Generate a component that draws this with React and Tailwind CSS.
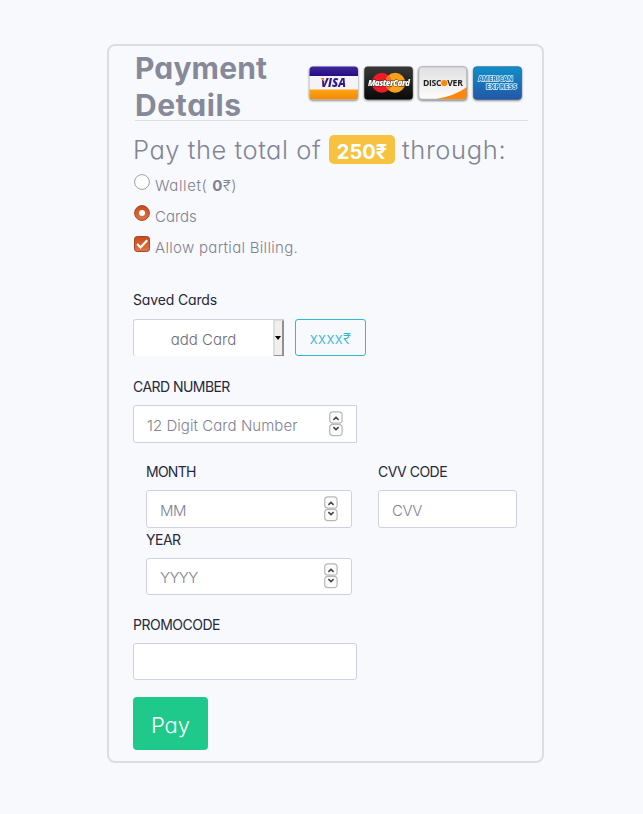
import React from "react";

function Stepper() {
  return (
    <svg className="relative -top-[0.5px] h-[26px] w-[14px] shrink-0" viewBox="0 0 14 26" fill="none">
      <rect x="0.7" y="0.9" width="12.4" height="11.2" rx="3.2" fill="#fbfbfa" stroke="#b8b8b8" strokeWidth="1.2" />
      <rect x="0.7" y="13.4" width="12.4" height="11.2" rx="3.2" fill="#fbfbfa" stroke="#b8b8b8" strokeWidth="1.2" />
      <path d="M4.4 8.9 7 6.4l2.6 2.5" stroke="#444" strokeWidth="1.5" />
      <path d="M4.4 16.1 7 18.6l2.6-2.5" stroke="#444" strokeWidth="1.5" />
    </svg>
  );
}

function Label({ children, className = "tracking-[-0.5px]" }) {
  return (
    <div className={`h-5 whitespace-nowrap text-[14px] leading-5 text-[#26283c] ${className}`}>
      <span>{children}</span>
    </div>
  );
}

function Field({ text, stepper, className = "" }) {
  return (
    <div className={`flex items-center justify-between border border-[#cfd0e2] bg-white pl-[13px] pr-[13px] text-[15px] font-[350] text-[#7f8292] ${className}`}>
      <span className="relative top-[2px] whitespace-nowrap">{text}</span>
      {stepper && <Stepper />}
    </div>
  );
}

function CardFrame({ children }) {
  return (
    <svg className="h-[37px] w-[50px] drop-shadow-[0_1px_1px_rgba(0,0,0,0.55)]" viewBox="0 0 50 37">
      {children}
    </svg>
  );
}

function Brands() {
  return (
    <div className="flex gap-[4.7px]">
      <CardFrame>
        <defs>
          <clipPath id="brand-clip"><rect x="0.5" y="1.5" width="48.5" height="33" rx="3.5" /></clipPath>
          <linearGradient id="visa-top" x2="0" y2="1"><stop stopColor="#3c2ba0" /><stop offset="1" stopColor="#2a0a80" /></linearGradient>
          <linearGradient id="visa-low" x2="0" y2="1"><stop stopColor="#ffa416" /><stop offset="1" stopColor="#f08a00" /></linearGradient>
        </defs>
        <g clipPath="url(#brand-clip)">
          <rect width="50" height="37" fill="#f4f4f6" />
          <rect y="1" width="50" height="10" fill="url(#visa-top)" />
          <rect y="24.5" width="50" height="10" fill="url(#visa-low)" />
        </g>
        <text x="12" y="22.3" textLength="25" lengthAdjust="spacingAndGlyphs" fontFamily="Open Sans, sans-serif" fontSize="12.5" fontWeight="800" fontStyle="italic" fill="#34188f">VISA</text>
        <path d="M11.5 13.3h3.4l1 4.2Z" fill="#f7a01d" />
      </CardFrame>
      <CardFrame>
        <defs><linearGradient id="mc" x2="0" y2="1"><stop stopColor="#383838" /><stop offset="1" stopColor="#090909" /></linearGradient></defs>
        <rect x="0.3" y="1.5" width="48.5" height="33" rx="3.5" fill="url(#mc)" />
        <circle cx="17.8" cy="17.7" r="10" fill="#ed1b24" />
        <circle cx="31.2" cy="17.7" r="10" fill="#f9a01b" />
        <path d="M24.5 10.3a10 10 0 0 1 0 14.8 10 10 0 0 1 0-14.8" fill="#f16d22" />
        <text x="4" y="20.8" letterSpacing="-0.6" fontFamily="Open Sans, sans-serif" fontSize="8.2" fontWeight="800" fontStyle="italic" fill="#fff" stroke="#222" strokeWidth="0.8" paintOrder="stroke">MasterCard</text>
      </CardFrame>
      <CardFrame>
        <defs>
          <linearGradient id="disc" x2="0" y2="1"><stop stopColor="#dedede" /><stop offset="1" stopColor="#ffffff" /></linearGradient>
          <clipPath id="disc-clip"><rect x="0.5" y="1.5" width="48.5" height="33" rx="3.5" /></clipPath>
        </defs>
        <g clipPath="url(#disc-clip)">
          <rect width="50" height="37" fill="url(#disc)" />
          <path d="M16 34.5Q37 31 49 22v12.5Z" fill="#ff8708" />
        </g>
        <rect x="0.8" y="1.8" width="47.9" height="32.4" rx="3.3" fill="none" stroke="#a0a0a0" strokeWidth=".7" />
        <text x="5" y="21.1" letterSpacing="-0.3" fontFamily="Open Sans, sans-serif" fontSize="8.6" fontWeight="700" fill="#222">DISC</text>
        <circle cx="26.2" cy="18" r="3.1" fill="#ff8708" />
        <text x="29.2" y="21.1" letterSpacing="-0.2" fontFamily="Open Sans, sans-serif" fontSize="8.6" fontWeight="700" fill="#222">VER</text>
      </CardFrame>
      <CardFrame>
        <defs><linearGradient id="amex" x2="0" y2="1"><stop stopColor="#1090c8" /><stop offset="1" stopColor="#2456a8" /></linearGradient></defs>
        <rect x="0.5" y="1.7" width="48" height="32.6" rx="3.3" fill="url(#amex)" stroke="#205c96" strokeWidth=".6" />
        <g fontFamily="Open Sans, sans-serif" fontSize="6.6" fontWeight="800" fill="#2585c4" stroke="#d8edf8" strokeWidth="1.3" paintOrder="stroke">
          <text x="5.2" y="15.8" textLength="35" lengthAdjust="spacingAndGlyphs">AMERICAN</text>
          <text x="13" y="24.4" textLength="31" lengthAdjust="spacingAndGlyphs">EXPRESS</text>
        </g>
      </CardFrame>
    </div>
  );
}

function Radio({ checked }) {
  return (
    <svg className="size-4 shrink-0" viewBox="0 0 16 16">
      <defs><linearGradient id="radio-fill" x2="0" y2="1"><stop stopColor="#c8491a" /><stop offset="1" stopColor="#e27548" /></linearGradient></defs>
      <circle cx="8" cy="8" r="7.4" fill={checked ? "url(#radio-fill)" : "#fff"} stroke={checked ? "#a8441f" : "#a0a0a0"} />
      {checked && <circle cx="8" cy="8" r="3" fill="#fff" />}
    </svg>
  );
}

function Checkbox() {
  return (
    <svg className="size-4 shrink-0" viewBox="0 0 16 16">
      <defs><linearGradient id="check-fill" x2="0" y2="1"><stop stopColor="#c8491a" /><stop offset="1" stopColor="#e27548" /></linearGradient></defs>
      <rect x=".5" y=".5" width="15" height="15" rx="2.8" fill="url(#check-fill)" stroke="#a8441f" />
      <path d="m3.2 8 3.3 3.4 6.7-7.2" fill="none" stroke="#fff" strokeWidth="2.2" />
    </svg>
  );
}

function Option({ control, children, className = "tracking-[0.3px]" }) {
  return (
    <div className={`flex h-[31px] items-start gap-[5px] pl-px text-[15px] font-[350] text-[#7f8292] ${className}`}>
      {control}
      <span className="mt-[2px] whitespace-nowrap leading-5">{children}</span>
    </div>
  );
}

export default function App() {
  return (
    <div className="min-h-[814px] w-[643px] bg-[#f8f9fd] pl-[107px] pt-[44px] font-['Inter',sans-serif] [font-feature-settings:'cv11']">
      <div className="h-[719px] w-[437px] rounded-lg border-2 border-[#dcdedd]">
        <div className="ml-[26px] flex h-[75px] w-[393px] justify-between border-b border-[#dcdddf] pt-[4px]">
          <h1 className="w-[150px] text-[30px] font-bold leading-[37px] text-[#868999]">
            <span className="tracking-[0.15px]">Payment</span><br /><span className="tracking-[0.65px]">Details</span>
          </h1>
          <div className="mr-[5px] mt-[15px]"><Brands /></div>
        </div>

        <div className="pl-[24px]">
          <div className="flex h-[53px] items-start whitespace-nowrap pt-[14px] text-[25.5px] font-[350] leading-[30px] text-[#828595]">
            <span className="w-[196px] tracking-[0.55px]">Pay the total of</span>
            <span className="flex h-[29px] w-[66px] items-center justify-center rounded-[5px] bg-[#f7c23f] pt-[5px] text-[20px] font-bold text-white">250₹</span>
            <span className="ml-[7px] tracking-[0.65px]">through:</span>
          </div>

          <Option control={<Radio />} className="tracking-[0.6px]">Wallet( <b className="font-bold">0</b>₹)</Option>
          <Option control={<Radio checked />} className="tracking-[0px]">Cards</Option>
          <Option control={<Checkbox />}>Allow partial Billing.</Option>

          <Label className="mt-[23px] tracking-[-0.15px]">Saved Cards</Label>
          <div className="mt-[9px] flex h-[37px] gap-[11px]">
            <div className="flex w-[151px] rounded-l-[3px] border-l border-t border-[#cfd0e2] bg-white text-[15px] font-[350] text-[#6a6e79]">
              <span className="flex flex-1 items-center justify-center pt-[5px]">add Card</span>
              <span className="flex w-[11px] items-center justify-center border-y border-l-2 border-r-2 border-r-[#929093] border-b-[#929093] border-t-[#dedede] border-l-[#dedede] bg-[#f0efee]">
                <svg className="-ml-px h-[4px] w-[6px] shrink-0" viewBox="0 0 6 4"><path d="M0 0h6L3 4Z" fill="#000" /></svg>
              </span>
            </div>
            <div className="flex w-[71px] items-center justify-center rounded-[3px] border border-[#34b9cc] pt-[3px] text-[15px] font-[350] tracking-[0.4px] text-[#2bb5c9]">xxxx₹</div>
          </div>

          <Label className="mt-[21px] tracking-[-0.55px]">CARD NUMBER</Label>
          <Field text="12 Digit Card Number" stepper className="mt-[8px] h-[38px] w-[224px] rounded-l-[3px] tracking-[0.05px]" />

          <div className="mt-[19px] flex gap-[26px] pl-[13px]">
            <div className="w-[206px]">
              <Label className="tracking-[-0.75px]">MONTH</Label>
              <Field text="MM" stepper className="mt-[8px] h-[38px] rounded-[3px] tracking-[-0.5px]" />
              <Label className="mt-[2px] tracking-[-0.5px]">YEAR</Label>
              <Field text="YYYY" stepper className="mt-[8px] h-[37px] rounded-[3px] tracking-[-0.6px]" />
            </div>
            <div className="w-[139px]">
              <Label>CVV CODE</Label>
              <Field text="CVV" className="mt-[8px] h-[38px] rounded-[3px] tracking-[-0.5px]" />
            </div>
          </div>

          <Label className="mt-[20px] tracking-[-0.5px]">PROMOCODE</Label>
          <Field text="" className="mt-[8px] h-[37px] w-[224px] rounded-[3px]" />

          <button className="mt-[17px] flex h-[53px] w-[75px] items-center justify-center rounded-[4px] bg-[#1fc98b] pt-[3px] text-[22px] font-[350] text-white">Pay</button>
        </div>
      </div>
    </div>
  );
}
